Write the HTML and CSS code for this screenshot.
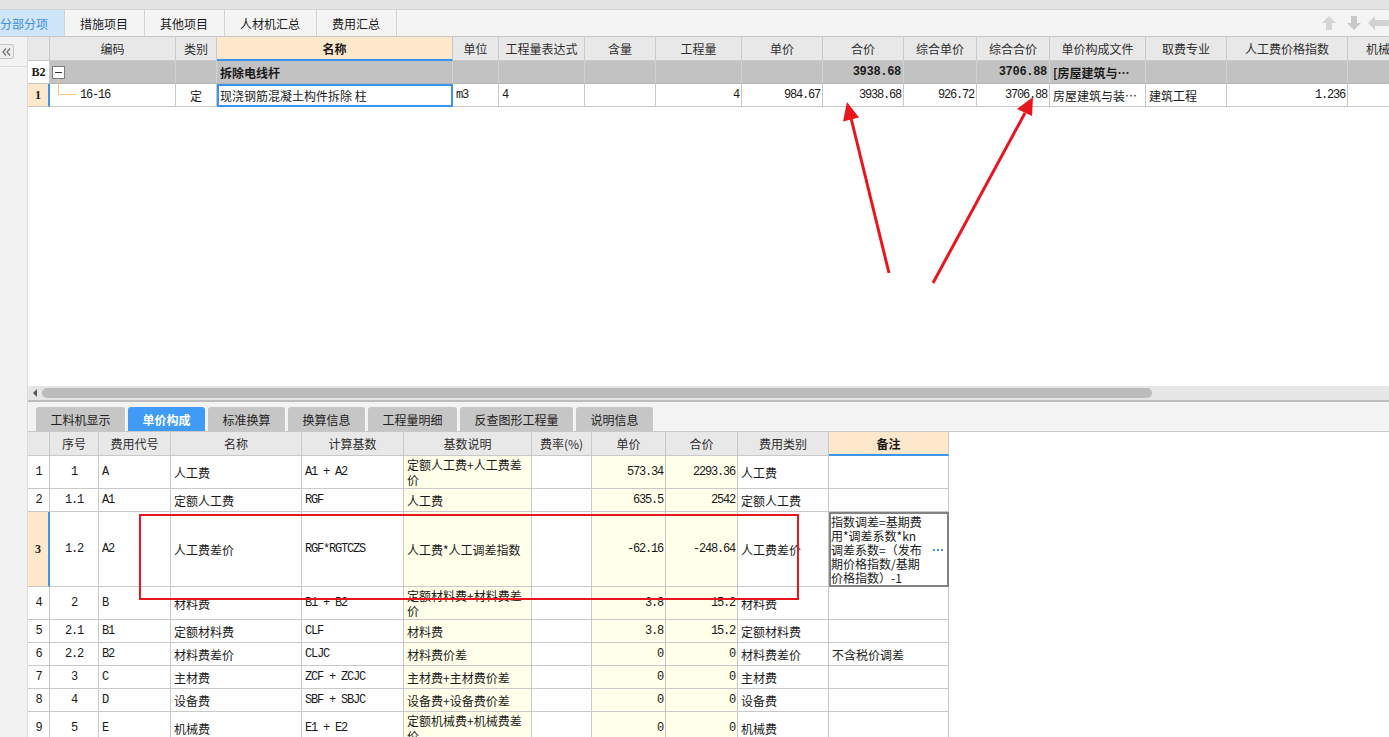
FILE: index.html
```html
<!DOCTYPE html>
<html lang="zh-CN">
<head>
<meta charset="utf-8">
<title>分部分项</title>
<link rel="stylesheet" href="styles.css">
</head>
<body>
<div class="app">
  <div class="topstrip"></div>
  <div class="tabbar">
    <div class="tab active">分部分项</div>
    <div class="tab">措施项目</div>
    <div class="tab">其他项目</div>
    <div class="tab">人材机汇总</div>
    <div class="tab">费用汇总</div>
    <div class="navs">
      <svg class="nav up" width="14" height="14" viewBox="0 0 14 14"><polygon points="7,0 14,7 10,7 10,14 4,14 4,7 0,7"/></svg>
      <svg class="nav down" width="14" height="14" viewBox="0 0 14 14"><polygon points="4,0 10,0 10,7 14,7 7,14 0,7 4,7"/></svg>
      <svg class="nav left" width="21" height="14" viewBox="0 0 21 14"><polygon points="0,7 7,0 7,4 21,4 21,10 7,10 7,14"/></svg>
    </div>
  </div>
  <div class="body">
    <aside class="sidebar">
      <div class="side-top">
        <div class="collapse"><svg width="10" height="8" viewBox="0 0 10 8"><polyline points="4,0.5 1,4 4,7.5"/><polyline points="8,0.5 5,4 8,7.5"/></svg></div>
      </div>
    </aside>
    <main class="content">
      <section class="upper">
        <div class="grid gtop">
          <div class="cell hd"></div>
          <div class="cell hd">编码</div>
          <div class="cell hd">类别</div>
          <div class="cell hd hsel">名称</div>
          <div class="cell hd">单位</div>
          <div class="cell hd">工程量表达式</div>
          <div class="cell hd">含量</div>
          <div class="cell hd">工程量</div>
          <div class="cell hd">单价</div>
          <div class="cell hd">合价</div>
          <div class="cell hd">综合单价</div>
          <div class="cell hd">综合合价</div>
          <div class="cell hd">单价构成文件</div>
          <div class="cell hd">取费专业</div>
          <div class="cell hd">人工费价格指数</div>
          <div class="cell hd">机械费价格指数</div>

          <div class="cell rh serif c">B2</div>
          <div class="cell grp tree0"><span class="minus"></span></div>
          <div class="cell grp"></div>
          <div class="cell grp b">拆除电线杆</div>
          <div class="cell grp"></div>
          <div class="cell grp"></div>
          <div class="cell grp"></div>
          <div class="cell grp"></div>
          <div class="cell grp"></div>
          <div class="cell grp m b r">3938.68</div>
          <div class="cell grp"></div>
          <div class="cell grp m b r">3706.88</div>
          <div class="cell grp b">[房屋建筑与…</div>
          <div class="cell grp"></div>
          <div class="cell grp"></div>
          <div class="cell grp"></div>

          <div class="cell rh rsel serif c">1</div>
          <div class="cell tree1"><span class="branch"></span><span class="m">16-16</span></div>
          <div class="cell c">定</div>
          <div class="cell editing">现浇钢筋混凝土构件拆除 柱</div>
          <div class="cell m">m3</div>
          <div class="cell m">4</div>
          <div class="cell"></div>
          <div class="cell m r">4</div>
          <div class="cell m r">984.67</div>
          <div class="cell m r">3938.68</div>
          <div class="cell m r">926.72</div>
          <div class="cell m r">3706.88</div>
          <div class="cell">房屋建筑与装…</div>
          <div class="cell">建筑工程</div>
          <div class="cell m r">1.236</div>
          <div class="cell"></div>
        </div>
      </section>

      <div class="hscroll"><span class="larr"></span><span class="thumb"></span></div>
      <div class="splitter"></div>

      <div class="subtabs">
        <div class="stab w89">工料机显示</div>
        <div class="stab w77 on">单价构成</div>
        <div class="stab w77">标准换算</div>
        <div class="stab w77">换算信息</div>
        <div class="stab w89">工程量明细</div>
        <div class="stab w113">反查图形工程量</div>
        <div class="stab w77">说明信息</div>
      </div>

      <section class="lower">
        <div class="grid gbot">
          <div class="cell hd"></div>
          <div class="cell hd">序号</div>
          <div class="cell hd">费用代号</div>
          <div class="cell hd">名称</div>
          <div class="cell hd">计算基数</div>
          <div class="cell hd">基数说明</div>
          <div class="cell hd">费率(%)</div>
          <div class="cell hd">单价</div>
          <div class="cell hd">合价</div>
          <div class="cell hd">费用类别</div>
          <div class="cell hd hsel">备注</div>

          <div class="cell rh m c">1</div>
          <div class="cell m c">1</div>
          <div class="cell m">A</div>
          <div class="cell">人工费</div>
          <div class="cell m">A1 + A2</div>
          <div class="cell y"><span class="two">定额人工费+人工费差<br>价</span></div>
          <div class="cell"></div>
          <div class="cell y m r">573.34</div>
          <div class="cell y m r">2293.36</div>
          <div class="cell">人工费</div>
          <div class="cell"></div>

          <div class="cell rh m c">2</div>
          <div class="cell m c">1.1</div>
          <div class="cell m">A1</div>
          <div class="cell">定额人工费</div>
          <div class="cell m">RGF</div>
          <div class="cell y">人工费</div>
          <div class="cell"></div>
          <div class="cell y m r">635.5</div>
          <div class="cell y m r">2542</div>
          <div class="cell">定额人工费</div>
          <div class="cell"></div>

          <div class="cell rh rsel serif c">3</div>
          <div class="cell m c">1.2</div>
          <div class="cell m">A2</div>
          <div class="cell">人工费差价</div>
          <div class="cell m">RGF*RGTCZS</div>
          <div class="cell y">人工费*人工调差指数</div>
          <div class="cell"></div>
          <div class="cell y m r">-62.16</div>
          <div class="cell y m r">-248.64</div>
          <div class="cell">人工费差价</div>
          <div class="cell note"><span class="note-text">指数调差=基期费<br>用*调差系数*kn<br>调差系数=（发布<br>期价格指数/基期<br>价格指数）-1</span><svg class="dots" width="11" height="2" viewBox="0 0 11 2"><rect x="0" y="0" width="2" height="2"/><rect x="4" y="0" width="2" height="2"/><rect x="8" y="0" width="2" height="2"/></svg></div>

          <div class="cell rh m c">4</div>
          <div class="cell m c">2</div>
          <div class="cell m">B</div>
          <div class="cell">材料费</div>
          <div class="cell m">B1 + B2</div>
          <div class="cell y"><span class="two">定额材料费+材料费差<br>价</span></div>
          <div class="cell"></div>
          <div class="cell y m r">3.8</div>
          <div class="cell y m r">15.2</div>
          <div class="cell">材料费</div>
          <div class="cell"></div>

          <div class="cell rh m c">5</div>
          <div class="cell m c">2.1</div>
          <div class="cell m">B1</div>
          <div class="cell">定额材料费</div>
          <div class="cell m">CLF</div>
          <div class="cell y">材料费</div>
          <div class="cell"></div>
          <div class="cell y m r">3.8</div>
          <div class="cell y m r">15.2</div>
          <div class="cell">定额材料费</div>
          <div class="cell"></div>

          <div class="cell rh m c">6</div>
          <div class="cell m c">2.2</div>
          <div class="cell m">B2</div>
          <div class="cell">材料费差价</div>
          <div class="cell m">CLJC</div>
          <div class="cell y">材料费价差</div>
          <div class="cell"></div>
          <div class="cell y m r">0</div>
          <div class="cell y m r">0</div>
          <div class="cell">材料费差价</div>
          <div class="cell">不含税价调差</div>

          <div class="cell rh m c">7</div>
          <div class="cell m c">3</div>
          <div class="cell m">C</div>
          <div class="cell">主材费</div>
          <div class="cell m">ZCF + ZCJC</div>
          <div class="cell y">主材费+主材费价差</div>
          <div class="cell"></div>
          <div class="cell y m r">0</div>
          <div class="cell y m r">0</div>
          <div class="cell">主材费</div>
          <div class="cell"></div>

          <div class="cell rh m c">8</div>
          <div class="cell m c">4</div>
          <div class="cell m">D</div>
          <div class="cell">设备费</div>
          <div class="cell m">SBF + SBJC</div>
          <div class="cell y">设备费+设备费价差</div>
          <div class="cell"></div>
          <div class="cell y m r">0</div>
          <div class="cell y m r">0</div>
          <div class="cell">设备费</div>
          <div class="cell"></div>

          <div class="cell rh m c">9</div>
          <div class="cell m c">5</div>
          <div class="cell m">E</div>
          <div class="cell">机械费</div>
          <div class="cell m">E1 + E2</div>
          <div class="cell y"><span class="two">定额机械费+机械费差<br>价</span></div>
          <div class="cell"></div>
          <div class="cell y m r">0</div>
          <div class="cell y m r">0</div>
          <div class="cell">机械费</div>
          <div class="cell"></div>
        </div>
      </section>
    </main>
  </div>

  <svg class="annot" width="1389" height="737" viewBox="0 0 1389 737">
    <rect x="140" y="515" width="658" height="84" fill="none" stroke="#e8161e" stroke-width="2"/>
    <line x1="889" y1="273" x2="851" y2="118" stroke="#e8161e" stroke-width="3"/>
    <polygon points="847,102 859,117.6 843,121.4" fill="#e8161e"/>
    <line x1="933" y1="283" x2="1025" y2="113" stroke="#e8161e" stroke-width="3"/>
    <polygon points="1033,97 1032,116 1017,109" fill="#e8161e"/>
  </svg>
</div>
</body>
</html>
```

FILE: styles.css
```css
* { box-sizing: border-box; }
html, body { margin: 0; padding: 0; }
body {
  font-family: "Noto Sans CJK SC", "Noto Sans", sans-serif;
  font-size: 12px;
  color: #1a1a1a;
  background: #fff;
}
.app {
  position: relative;
  width: 1389px;
  height: 737px;
  overflow: hidden;
  display: flex;
  flex-direction: column;
}
.topstrip {
  flex: none;
  height: 10px;
  background: #e3e3e3;
  border-bottom: 1px solid #d4d4d4;
}
.tabbar {
  flex: none;
  height: 27px;
  background: #f4f4f4;
  border-bottom: 1px solid #c8c8c8;
  display: flex;
  align-items: stretch;
}
.tab {
  padding: 0 16px 0 15px;
  border-right: 1px solid #d3d3d3;
  display: flex;
  align-items: center;
  color: #1a1a1a;
  white-space: nowrap;
}
.tab.active {
  margin-left: -15px;
  background: #cfe5fa;
  color: #3d8fe2;
}
.navs {
  margin-left: auto;
  display: flex;
  align-items: center;
}
.nav.up { fill: #d5d5d5; margin-right: 11px; }
.nav.down { fill: #c8c8c8; margin-right: 7px; }
.nav.left { fill: #d2d2d2; }

.body {
  flex: 1;
  display: flex;
  min-height: 0;
}
.sidebar {
  flex: none;
  width: 28px;
  background: #f2f2f2;
  border-right: 1px solid #dcdcdc;
}
.side-top {
  height: 30px;
  padding-top: 7px;
  border-bottom: 1px solid #dadada;
}
.collapse {
  width: 14px;
  height: 15px;
  border: 1px solid #c4c4c4;
  border-left: none;
  border-radius: 0 3px 3px 0;
  background: #eeeeee;
  display: flex;
  align-items: center;
  justify-content: center;
}
.collapse polyline { fill: none; stroke: #6e6e6e; stroke-width: 1.2; }

.content {
  flex: 1;
  min-width: 0;
  display: flex;
  flex-direction: column;
}
.upper {
  flex: none;
  height: 349px;
  background: #fff;
  overflow: hidden;
}
.hscroll {
  flex: none;
  height: 14px;
  background: #e6e6e6;
  display: flex;
  align-items: center;
}
.larr {
  margin-left: 5px;
  width: 0;
  height: 0;
  border-right: 4px solid #555;
  border-top: 4px solid transparent;
  border-bottom: 4px solid transparent;
}
.thumb {
  margin-left: 5px;
  width: 1110px;
  height: 10px;
  border-radius: 5px;
  background: #bcbcbc;
}
.splitter {
  flex: none;
  height: 2px;
  background: #bdbdbd;
}
.subtabs {
  flex: none;
  height: 30px;
  background: #f3f3f3;
  border-bottom: 1px solid #c8c8c8;
  display: flex;
  align-items: flex-end;
  gap: 3px;
  padding-left: 8px;
}
.stab {
  height: 24px;
  background: #c6c6c6;
  border-radius: 3px 3px 0 0;
  display: flex;
  align-items: center;
  justify-content: center;
  color: #222;
  white-space: nowrap;
}
.stab.on { background: #3f9bf5; color: #fff; font-weight: bold; }
.w77 { width: 77px; }
.w89 { width: 89px; }
.w113 { width: 113px; }

.lower {
  flex: 1;
  background: #fff;
  overflow: hidden;
}

/* grids */
.grid { display: grid; width: max-content; }
.gtop {
  grid-template-columns: 22px 126px 41px 236px 46px 86px 71px 86px 81px 81px 73px 73px 96px 81px 121px 121px;
  grid-template-rows: 24px 23px 23px;
}
.gbot {
  grid-template-columns: 22px 49px 72px 131px 102px 128px 60px 74px 72px 91px 120px;
  grid-template-rows: 24px 33px 23px 75px 33px 23px 23px 23px 23px 33px;
}
.cell {
  border-right: 1px solid #c9c9c9;
  border-bottom: 1px solid #c9c9c9;
  padding: 0 3px;
  display: flex;
  align-items: center;
  white-space: nowrap;
  overflow: hidden;
  color: #1a1a1a;
}
.hd {
  background: #e8e8e8;
  justify-content: center;
  color: #2e2e2e;
}
.hsel {
  background: #fee8cb;
  border-bottom: 2px solid #3d93f0;
  font-weight: bold;
  color: #1a1a1a;
}
.rh { background: #fff; padding: 0; }
.rsel {
  background: #fee8cb;
  border-right: 2px solid #3d93f0;
}
.serif { font-family: "Liberation Serif", serif; font-weight: bold; font-size: 12px; }
.grp { background: #c2c2c2; border-right-color: #d2d2d2; border-bottom-color: #b4b4b4; }
.b { font-weight: bold; }
.c { justify-content: center; }
.r { justify-content: flex-end; padding-right: 2px; }
.m { font-family: "Liberation Mono", monospace; letter-spacing: -1.2px; }
.m.b { letter-spacing: -0.3px; }
.y { background: #ffffea; }
.two { white-space: normal; line-height: 15px; }

/* tree */
.tree0 { padding-left: 2px; }
.minus {
  position: relative;
  width: 13px;
  height: 13px;
  border: 1px solid #7e7e7e;
  background: #fff;
  display: flex;
  align-items: center;
  justify-content: center;
}
.minus::before {
  content: "";
  width: 7px;
  height: 1px;
  background: #333;
}
.minus::after {
  content: "";
  position: absolute;
  left: 5px;
  top: 12px;
  height: 6px;
  border-left: 1px solid #ffc86e;
}
.tree1 { padding-left: 8px; }
.branch {
  align-self: flex-start;
  width: 18px;
  height: 11px;
  border-left: 1px solid #ffc86e;
  border-bottom: 1px solid #ffc86e;
  margin-right: 4px;
}
.editing {
  border: 2px solid #3d93f0;
  padding-left: 1px;
}

/* note cell */
.note {
  border: 2px solid #828282;
  padding: 0;
  align-items: center;
}
.note-text {
  width: 102px;
  white-space: nowrap;
  line-height: 14px;
}
.dots { fill: #4a94dc; }

/* annotations */
.annot {
  position: absolute;
  left: 0;
  top: 0;
  pointer-events: none;
}
```
